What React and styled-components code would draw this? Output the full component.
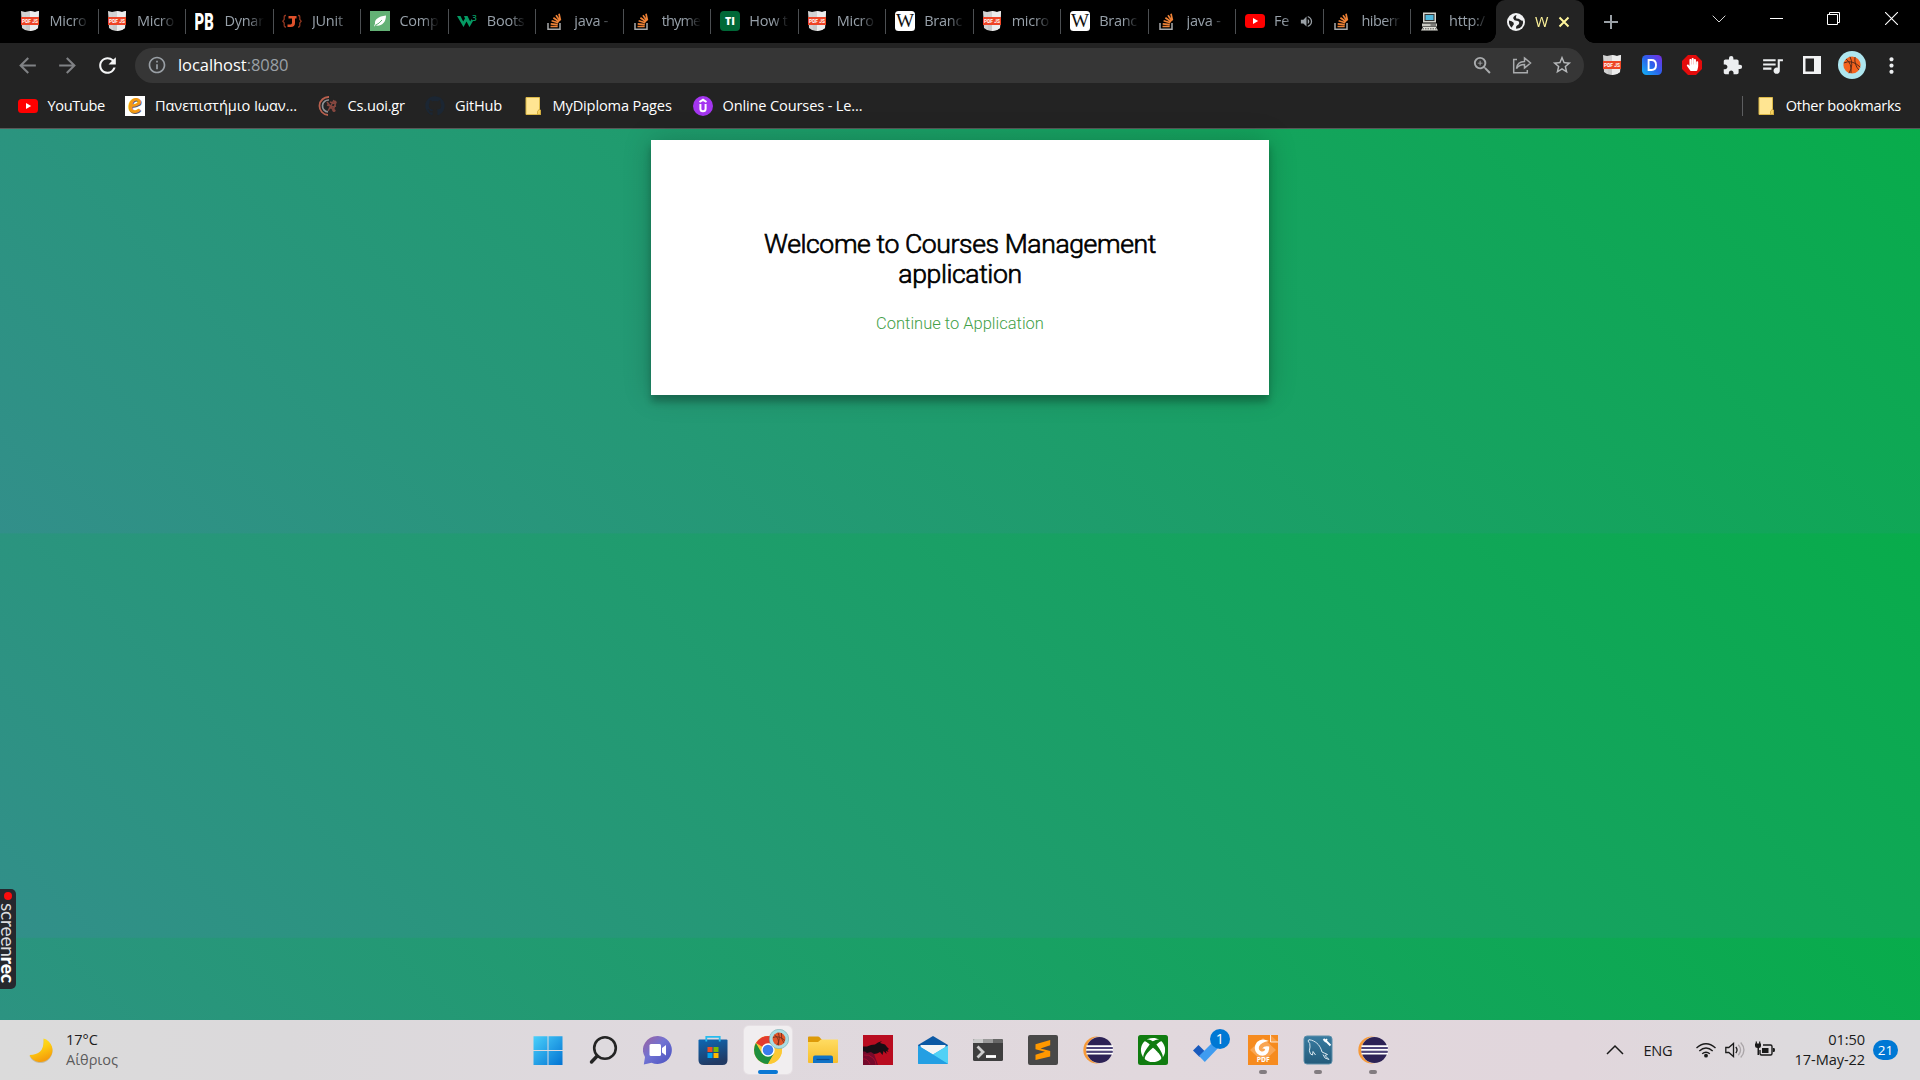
import React from "react";
import styled, { createGlobalStyle, css } from "styled-components";
import {
  MdArrowBack, MdArrowForward, MdRefresh, MdInfoOutline, MdZoomIn, MdStarOutline,
  MdExtension, MdQueueMusic, MdMoreVert, MdVolumeUp,
} from "react-icons/md";
import { FaGithub, FaHandPaper, FaXbox } from "react-icons/fa";

const UI = `"Open Sans", "Noto Sans", sans-serif`;

const GlobalStyle = createGlobalStyle`
  * { box-sizing: border-box; }
  body { margin: 0; overflow: hidden; background: #000; }
  svg { display: block; flex: none; }
`;

const Screen = styled.div`
  width: 1920px;
  height: 1080px;
  display: flex;
  flex-direction: column;
  position: relative;
  overflow: hidden;
  font-family: ${UI};
`;

/* ---------- tab strip ---------- */
const TabStrip = styled.header`
  height: 43px;
  flex: none;
  display: flex;
  background: #000;
  padding-left: 11.5px;
`;
const Tab = styled.div`
  width: 87.47px;
  height: 42px;
  flex: none;
  display: flex;
  align-items: center;
  padding-left: 8.5px;
`;
const TabTitle = styled.span`
  margin-left: 9.5px;
  flex: 1;
  min-width: 0;
  white-space: nowrap;
  font-size: 14.5px;
  letter-spacing: ${(p) => p.$ls ?? -0.25}px;
  line-height: 20px;
  color: ${(p) => (p.$active ? "#fff59b" : "#97a0a9")};
  mask-image: linear-gradient(90deg, #000 calc(100% - ${(p) => (p.$active ? 8 : 16)}px), transparent);
`;
const TabEnd = styled.span`
  width: ${(p) => (p.$hidden ? 10 : 1)}px;
  margin-left: ${(p) => (p.$hidden ? 0 : 9)}px;
  height: 25px;
  background: ${(p) => (p.$hidden ? "transparent" : "#4c4f52")};
`;
const ActiveTab = styled.div`
  width: 88px;
  height: 43px;
  margin-left: -2px;
  flex: none;
  display: flex;
  align-items: center;
  padding: 0 14px 0 11px;
  background: #232323;
  border-radius: 9px 9px 0 0;
  position: relative;
  &::before, &::after {
    content: "";
    position: absolute;
    bottom: 0;
    width: 10px;
    height: 10px;
  }
  &::before { left: -10px; background: radial-gradient(circle at 0 0, transparent 9.5px, #232323 10px); }
  &::after { right: -10px; background: radial-gradient(circle at 100% 0, transparent 9.5px, #232323 10px); }
`;
const NewTab = styled.div`
  width: 54px;
  height: 43px;
  display: flex;
  align-items: center;
  justify-content: center;
`;
const WindowButtons = styled.div`
  display: flex;
  margin-left: auto;
`;
const WindowButton = styled.div`
  width: 57.4px;
  height: 37px;
  display: flex;
  align-items: center;
  justify-content: center;
`;

/* ---------- toolbar ---------- */
const Toolbar = styled.div`
  height: 43px;
  flex: none;
  display: flex;
  align-items: center;
  padding: 1px 8px 0 7.5px;
  background: #232323;
`;
const ToolButton = styled.div`
  width: 40px;
  height: 40px;
  display: flex;
  align-items: center;
  justify-content: center;
  color: ${(p) => p.$color || "#eceef0"};
`;
const Omnibox = styled.div`
  width: 1450px;
  height: 35px;
  margin: 0 7.7px 0 7.5px;
  border-radius: 18px;
  background: #363636;
  display: flex;
  align-items: center;
  padding: 0 2px 0 12.5px;
  color: #9aa0a6;
`;
const Address = styled.span`
  margin-left: 10.5px;
  font-size: 16.5px;
  line-height: 24px;
  letter-spacing: -0.05px;
  color: #fff;
  em { font-style: normal; color: #9aa0a6; }
`;
const OmniActions = styled.div`
  margin-left: auto;
  display: flex;
`;

/* ---------- bookmarks ---------- */
const Bookmarks = styled.nav`
  height: 43px;
  flex: none;
  display: flex;
  align-items: center;
  padding: 0 19px 3px 18px;
  background: #232323;
  border-bottom: 1px solid #585858;
`;
const Bookmark = styled.div`
  width: ${(p) => (p.$w ? `${p.$w}px` : "auto")};
  display: flex;
  align-items: center;
  color: #fff;
  white-space: nowrap;
  font-size: 14.6px;
  line-height: 20px;
  letter-spacing: ${(p) => p.$ls || 0}px;
  span { margin: 0 0 1px ${(p) => p.$gap || 10}px; }
`;
const BarDivider = styled.i`
  width: 1px;
  height: 20px;
  margin: 0 14px 0 auto;
  background: #5d5e60;
`;

/* ---------- web page ---------- */
const Page = styled.main`
  flex: 1;
  background: linear-gradient(45deg, #328f8a, #08ac4b) 0 0 / 100% 404.4px repeat-y;
  padding-top: 11px;
`;
const Card = styled.section`
  width: 618px;
  height: 255px;
  margin: 0 auto;
  padding: 89px 62px 0;
  background: #fff;
  box-shadow: 0 0 27px 0 rgba(0, 0, 0, 0.2), 0 7px 7px 0 rgba(0, 0, 0, 0.24);
  text-align: center;
  font-family: Roboto, sans-serif;
`;
const Heading = styled.h1`
  margin: 0 0 25px;
  font-size: 26.6px;
  font-weight: 300;
  line-height: 30px;
  letter-spacing: -0.4px;
  color: #000;
  -webkit-text-stroke: 0.7px #000;
`;
const Continue = styled.a`
  display: block;
  font-size: 16.5px;
  font-weight: 300;
  line-height: 20px;
  color: #43a047;
`;

/* ---------- recorder handle ---------- */
const Recorder = styled.aside`
  position: absolute;
  left: 0;
  top: 889px;
  width: 16px;
  height: 100px;
  border-radius: 0 5px 5px 0;
  background: #26282e;
  display: flex;
  flex-direction: column;
  align-items: center;
  padding-top: 3px;
  &::before {
    content: "";
    width: 8px;
    height: 8px;
    margin-right: 1px;
    flex: none;
    border-radius: 50%;
    background: #fb0d0d;
  }
  span {
    writing-mode: vertical-rl;
    font: 400 19.2px/16px Lato, sans-serif;
    margin-top: 3px;
    letter-spacing: -0.2px;
    color: #dcdcde;
    white-space: nowrap;
  }
  b { font-weight: 900; color: #fff; }
`;

/* ---------- taskbar ---------- */
const Taskbar = styled.footer`
  height: 60px;
  flex: none;
  display: flex;
  align-items: center;
  background: linear-gradient(90deg, #dbdbdb 0%, #dbd9db 15%, #dfd9de 35%, #e1d8dd 60%, #e1d6dc 82%, #dddadd 93%, #dcdadd 100%);
`;
const Weather = styled.div`
  width: 523.8px;
  padding: 0 0 0 28px;
  display: flex;
  align-items: center;
  font-size: 14.5px;
  line-height: 20px;
  color: #1c1c1c;
`;
const WeatherText = styled.div`
  margin-left: 13px;
  div + div { color: #5b5b5b; }
`;
const Apps = styled.div`
  display: flex;
  gap: 7px;
`;
const AppButton = styled.div`
  width: 48px;
  height: 48px;
  display: flex;
  align-items: center;
  justify-content: center;
  border-radius: 5px;
  position: relative;
  ${(p) => p.$active && css`
    background: #f1eef0;
    box-shadow: 0 0 0 1px #e6e0e4;
  `}
  &::after {
    content: "";
    display: ${(p) => (p.$active || p.$running ? "block" : "none")};
    position: absolute;
    bottom: 0;
    left: calc(50% - ${(p) => (p.$active ? 10 : 4)}px);
    width: ${(p) => (p.$active ? 20 : 8)}px;
    height: 4px;
    border-radius: 2px;
    background: ${(p) => (p.$active ? "#0a78d4" : "#827c80")};
  }
`;
const Overlay = styled.div`
  position: absolute;
  top: 3px;
  right: 3px;
`;
const Count = styled.div`
  position: absolute;
  top: 3px;
  right: 2px;
  width: 20px;
  height: 20px;
  border-radius: 50%;
  background: #0078d4;
  color: #fff;
  font-size: 14.5px;
  line-height: 20px;
  text-align: center;
`;
const Tray = styled.div`
  margin-left: auto;
  height: 60px;
  display: flex;
  align-items: center;
  padding-right: 22px;
  color: #1a1a1a;
`;
const Language = styled.span`
  margin: 0 22px 0 19.5px;
  width: 30px;
  font-size: 14.6px;
  letter-spacing: -0.3px;
`;
const TrayIcons = styled.div`
  display: flex;
  gap: 9.5px;
`;
const Clock = styled.div`
  width: 90.5px;
  padding-bottom: 2px;
  text-align: right;
  font-size: 14.6px;
  line-height: 20px;
  white-space: nowrap;
  letter-spacing: -0.1px;
`;
const Notices = styled.div`
  margin-left: 8px;
  width: 25px;
  height: 20px;
  border-radius: 10px;
  background: #0078d4;
  color: #fff;
  text-align: center;
  font-size: 13.5px;
  line-height: 20px;
`;

/* ---------- favicons ---------- */
const PdfJs = () => (
  <svg width="20" height="20" viewBox="0 0 20 20">
    <path d="M1 0l4 1 5-1 5 1 4-1-1 17-3 2-5 1-5-1-3-2z" fill="#d2d2d2" />
    <path d="M10 0l5 1 4-1-1 17-3 2-5 1z" fill="#ececec" />
    <path d="M5 1l1 18 4 1V13H5z" fill="#bdbdbd" opacity=".5" />
    <rect x="1" y="6" width="18" height="8" fill="#ee4426" />
    <text x="10" y="12.300" fontSize="6.200" fontWeight="700" fontFamily="Roboto, sans-serif" textAnchor="middle" textLength="16" lengthAdjust="spacingAndGlyphs" fill="#fff">PDF JS</text>
  </svg>
);
const ProBootstrap = () => (
  <svg width="20" height="20" viewBox="0 0 20 20">
    <g transform="translate(-.5 18.800) scale(.64 1)">
      <text x="0" y="0" fontSize="24" fontWeight="900" fontFamily="Roboto, sans-serif" fill="#fff" textLength="30" lengthAdjust="spacingAndGlyphs">PB</text>
    </g>
  </svg>
);
const JavaBrace = () => (
  <svg width="20" height="20" viewBox="0 0 20 20" fill="#e0512b">
    <path d="M4 4.500H3.300Q2.200 4.500 2.200 6v2.500L.8 10.200l1.400 1.700v2.600q0 1.500 1.100 1.500H4M16 4.500h.7q1.100 0 1.100 1.500v2.500l1.400 1.700-1.400 1.700v2.600q0 1.500-1.100 1.500H16" fill="none" stroke="#8f3620" strokeWidth="1.300" />
    <path d="M6.500 5h8v2.400H13V12q0 4-4.300 4H5.500v-2.500h3q1.500 0 1.500-1.800V7.400H6.500z" />
  </svg>
);
const Leaf = () => (
  <svg width="20" height="20" viewBox="0 0 20 20">
    <rect width="20" height="20" fill="#63b175" />
    <path d="M16 4.500C8 5.500 4.500 8.500 5 12.500L4 15.500l1.800-1C11 15.500 16 12 16 4.500z" fill="#fff" />
    <path d="M5 14.500q4.500-2 7-5.500" stroke="#63b175" fill="none" />
  </svg>
);
const W3 = () => (
  <svg width="20" height="20" viewBox="0 0 20 20">
    <path d="M0 5h3.500l2.700 5.500L8 7.500 7 5h3.500l2.700 5.500L14.500 8l1.500 2-3.500 6-3-5.500-3 5.500z" fill="#059a63" />
    <text x="15" y="9.500" fontSize="8.500" fontWeight="600" fontFamily="Open Sans, sans-serif" fill="#059a63">3</text>
  </svg>
);
const Stack = () => (
  <svg width="20" height="20" viewBox="0 0 20 20" fill="none">
    <path d="M3 12v6.200h12V12" stroke="#a8a9aa" strokeWidth="1.500" />
    <path d="M5.500 15.500h7.200M5.700 12.900l7.100.8M6.600 9.800l6.700 2M8.400 6.800l5.700 4M11 4.300l4 5.600M14 2.700l1.400 6.600" stroke="#ef8236" strokeWidth="1.700" />
  </svg>
);
const Ti = () => (
  <svg width="20" height="20" viewBox="0 0 20 20">
    <rect width="20" height="20" rx="4" fill="#006837" />
    <text x="10" y="14" fontSize="10.500" fontWeight="800" fontFamily="Open Sans, sans-serif" textAnchor="middle" fill="#fff">TI</text>
  </svg>
);
const Wiki = () => (
  <svg width="20" height="20" viewBox="0 0 20 20">
    <rect width="20" height="20" rx="3.500" fill="#fff" />
    <text x="10" y="16" fontSize="18" fontFamily="Liberation Serif, serif" textAnchor="middle" textLength="18" lengthAdjust="spacingAndGlyphs" fill="#111">W</text>
  </svg>
);
const YouTube = () => (
  <svg width="20" height="20" viewBox="0 0 20 20">
    <rect y="3" width="20" height="14" rx="3.500" fill="#f00" />
    <path d="M8 7l5.200 3L8 13z" fill="#fff" />
  </svg>
);
const Computer = () => (
  <svg width="20" height="20" viewBox="0 0 20 20">
    <rect x="3" y="1.500" width="13" height="10" fill="#d4d4cc" />
    <rect x="4.500" y="3" width="10" height="7" fill="#333" />
    <rect x="5.500" y="4" width="8" height="5" fill="#50b8dc" />
    <path d="M2 12.500h15v3H2z" fill="#c9c9c2" />
    <path d="M10.500 13.500h5.500v1h-5.500z" fill="#333" />
    <path d="M3 16h13l2 3.500H1z" fill="#deded6" />
    <path d="M2.500 17.800h14" stroke="#555" strokeDasharray="1.500 1" />
  </svg>
);
const Globe = () => (
  <svg width="18" height="18" viewBox="0 0 18 18">
    <circle cx="9" cy="9" r="9" fill="#f2f3f4" />
    <path d="M9.500 2Q6 3 6.300 5.500 7 8 10 7.800q2.500.2 2.300 2.300Q12 12 10 12.500q-1.500 1-.8 3.300Q13 16 15 13q1.800-3 .8-5.500-1 .5-2.500-.8Q12 5.500 9.300 5.500 8.500 4 9.500 2z" fill="#232323" />
    <path d="M2 7.500q3 .3 4.500 2 1 2-.5 3-1 .8-1 2.300Q1.500 12.500 2 7.500z" fill="#232323" />
  </svg>
);
const Epsilon = () => (
  <svg width="20" height="20" viewBox="0 0 20 20">
    <rect width="20" height="20" fill="#fff" />
    <text x="10.600" y="18" fontSize="28" fontWeight="700" fontStyle="italic" fontFamily="Lato, sans-serif" textAnchor="middle" fill="#5f6064">e</text>
    <text x="9.800" y="17.200" fontSize="28" fontWeight="700" fontStyle="italic" fontFamily="Lato, sans-serif" textAnchor="middle" fill="#f39a12">e</text>
  </svg>
);
const CsUoi = () => (
  <svg width="20" height="20" viewBox="0 0 20 20" fill="none">
    <path d="M11 1A9 9 0 0 0 10 19" stroke="#b9604e" strokeWidth="1.800" />
    <path d="M11 4a6 6 0 0 0-1 12" stroke="#8d9296" strokeWidth="1.700" />
    <path d="M9 6l7 9M16 4l-6 11M12 6l6 2M11 12l7-2M18 6l-3 9M9 9l7 2" stroke="#86473f" strokeWidth="1.500" />
    <circle cx="17" cy="6" r="1.600" fill="#86473f" /><circle cx="16" cy="14.500" r="1.600" fill="#86473f" />
  </svg>
);
const FolderPage = () => (
  <svg width="18" height="20" viewBox="0 0 18 20">
    <path d="M2 1.500h13.500v12l1 1V18.500H2z" fill="#ffe592" stroke="#dcb948" />
    <path d="M13.500 18.500v-3l2-2.500 1 1.500v4z" fill="#f6d15f" stroke="#c9a437" strokeWidth=".8" />
  </svg>
);
const GitHubMark = () => <FaGithub size={20} color="#1b2633" />;
const Udemy = () => (
  <svg width="20" height="20" viewBox="0 0 20 20">
    <circle cx="10" cy="10" r="10" fill="#a435f0" />
    <path d="M6.500 6L10 3.800 13.500 6M7.400 8v4.700q0 2.600 2.600 2.600t2.600-2.600V8" fill="none" stroke="#fff" strokeWidth="2" />
  </svg>
);
const ShareIcon = () => (
  <svg width="20" height="20" viewBox="0 0 20 20" fill="none" stroke="currentColor" strokeWidth="1.500">
    <path d="M5 4.500H1.700v13.300h13.600V15" />
    <path d="M4.500 13.500C5 9 8 6.500 12.500 6.500V3L18.500 8l-6 5V9.600C9 9.600 6.500 10.500 4.500 13.500z" />
  </svg>
);
const DExt = () => (
  <svg width="20" height="20" viewBox="0 0 20 20">
    <defs><linearGradient id="dx" x1="0" y1="1" x2="1" y2="0"><stop stopColor="#10b5f5" /><stop offset=".5" stopColor="#2c62ec" /><stop offset="1" stopColor="#7a2be2" /></linearGradient></defs>
    <rect width="20" height="20" rx="4.500" fill="url(#dx)" />
    <path d="M6.600 5H9.500q4.500 0 4.500 4.900T9.500 15H6.600z" fill="none" stroke="#fff" strokeWidth="1.900" />
  </svg>
);
const HandStop = () => (
  <svg width="20" height="20" viewBox="0 0 20 20">
    <path d="M6 0h8l6 6v8l-6 6H6l-6-6V6z" fill="#e40b0b" />
    <FaHandPaper x="4" y="3" size="13" color="#fff" />
  </svg>
);
const SidePanel = () => (
  <svg width="18" height="18" viewBox="0 0 18 18">
    <path d="M0 0h18v18H0zM2.500 2.500v13h8.500v-13z" fill="#f1f2f3" fillRule="evenodd" />
  </svg>
);
const Basketball = ({ size = 28 }) => (
  <svg width={size} height={size} viewBox="0 0 28 28">
    <circle cx="14" cy="14" r="14" fill="#aee6ef" />
    <circle cx="14" cy="14" r="8.600" fill="#f4631e" />
    <g fill="none" stroke="#5b2a16" strokeWidth="1">
      <path d="M5.800 12q8-4 16.400 4M12 5.700q4 8-1 16.500M8 8q6 4 5 14M17 6q-1 8 4 13" />
    </g>
  </svg>
);
const BallBadge = () => (
  <svg width="20" height="20" viewBox="0 0 20 20">
    <circle cx="10" cy="10" r="9.700" fill="#a9dde3" stroke="#74a9ae" strokeWidth=".6" />
    <circle cx="10" cy="10" r="6.400" fill="#e4572a" />
    <path d="M4 8.500q6-2.500 12 3M9 3.700q3 6-1 12.500M5.500 6q5 3 4 10.300M12.500 4q-1 6 2.500 10" fill="none" stroke="#6a2c1c" strokeWidth=".8" />
  </svg>
);

/* ---------- taskbar icons ---------- */
const Moon = () => (
  <svg width="25" height="26" viewBox="0 0 25 26">
    <defs><linearGradient id="mn" x1="0" y1="0" x2=".4" y2="1"><stop stopColor="#ffe52c" /><stop offset=".5" stopColor="#fecf10" /><stop offset="1" stopColor="#f59e0b" /></linearGradient></defs>
    <path d="M15.500 1.500A12 12 0 1 1 1.500 18Q17 18 15.500 1.500z" transform="translate(0 1)" fill="#c1bba5" />
    <path d="M15.500 1.500A12 12 0 1 1 1.500 18Q17 18 15.500 1.500z" fill="url(#mn)" />
  </svg>
);
const WinLogo = () => (
  <svg width="30" height="30" viewBox="0 0 30 30">
    <defs><linearGradient id="wn" gradientUnits="userSpaceOnUse" x1="0" y1="0" x2="30" y2="30"><stop stopColor="#4cd3fc" /><stop offset="1" stopColor="#0272d2" /></linearGradient></defs>
    <path d="M.5 1.200h14v13.800H.5zM15.500 1.200h14v13.800h-14zM.5 16h14v14H.5zM15.500 16h14v14h-14z" fill="url(#wn)" />
  </svg>
);
const Search = () => (
  <svg width="30" height="30" viewBox="0 0 30 30" fill="none" stroke="#242424">
    <circle cx="17" cy="13" r="10.800" strokeWidth="2.600" fill="#dedade" />
    <path d="M9.200 21L3.500 27" strokeWidth="3.400" strokeLinecap="round" />
  </svg>
);
const Chat = () => (
  <svg width="30" height="30" viewBox="0 0 30 30">
    <defs><linearGradient id="ct" x1="0" y1="0" x2="1" y2="1"><stop stopColor="#a0619d" /><stop offset=".45" stopColor="#7173d3" /><stop offset="1" stopColor="#4950bf" /></linearGradient></defs>
    <path d="M15 1a14.500 14 0 1 1-6.500 26.800L.8 29.500 2 22A14.500 14 0 0 1 15 1z" fill="url(#ct)" />
    <rect x="6.500" y="9" width="11.500" height="12" rx="1.500" fill="#fff" />
    <path d="M19 13l4-3v10.500l-4-3z" fill="#fff" />
  </svg>
);
const Store = () => (
  <svg width="30" height="30" viewBox="0 0 30 30">
    <defs><linearGradient id="st" x1="0" y1="0" x2=".3" y2="1"><stop stopColor="#0e68b4" /><stop offset="1" stopColor="#213a64" /></linearGradient></defs>
    <path d="M.5 5.500q0-1 1-1h27q1 0 1 1V25q0 5-5 5h-19q-5 0-5-5z" fill="url(#st)" />
    <path d="M8.300 6.500V1.800h13.400v4.700" fill="none" stroke="#27bbee" strokeWidth="1.800" />
    <path d="M9.500 12h5v5h-5z" fill="#f25022" /><path d="M15.500 12h5v5h-5z" fill="#7fba00" />
    <path d="M9.500 18h5v5h-5z" fill="#00a4ef" /><path d="M15.500 18h5v5h-5z" fill="#ffb900" />
  </svg>
);
const Chrome = () => (
  <svg width="28" height="28" viewBox="0 0 28 28">
    <circle cx="14" cy="14" r="14" fill="#fcc934" />
    <path d="M14 14L1.900 7A14 14 0 0 1 26.100 7z" fill="#e33b2e" />
    <path d="M1.900 7a14 14 0 0 0 12.100 21l6-10.500L14 14 8 17.500z" fill="#1e8e3e" />
    <path d="M14 7.500h12.300A14 14 0 0 1 14 28l6-10.500z" fill="#fcc934" />
    <circle cx="14" cy="14" r="6.700" fill="#fff" /><circle cx="14" cy="14" r="5.300" fill="#3b7ded" />
  </svg>
);
const Explorer = () => (
  <svg width="30" height="28" viewBox="0 0 30 28">
    <defs><linearGradient id="fo" x1="0" y1="0" x2="0" y2="1"><stop stopColor="#ffdc62" /><stop offset="1" stopColor="#f7bd2b" /></linearGradient></defs>
    <path d="M0 1.500Q0 .5 1 .5h9q1 0 1.600.7L14 4v6H0z" fill="#dd9a09" />
    <path d="M0 6h10l3-2.500h17V26q0 1-1 1H1q-1 0-1-1z" fill="url(#fo)" />
    <path d="M5 27v-5.500Q5 19.500 7 19.500h16q2 0 2 2V27z" fill="#1173c6" />
    <path d="M8.500 23.500h13" stroke="#0b4a8d" strokeWidth="1.200" />
  </svg>
);
const Dragon = () => (
  <svg width="30" height="30" viewBox="0 0 30 30">
    <rect width="30" height="30" fill="#b90c20" />
    <path d="M0 14q7 0 11 5l4 11H0z" fill="#750a2c" />
    <path d="M0 11.500h4l4-1.500 4-.5 3-2 4-1.500-2 2 5 1.500 2 2.500 2 2-1.500 1 1 2-2.500-1 .5 3-3-3-1 4-2.500-3-3 1.500-3 .5-3-2-4 1-2-1.500H0z" fill="#180e14" />
    <path d="M1 20q5-1 9 3 3 3 3 7M0 24q4-1 7 5" fill="none" stroke="#a50f31" />
  </svg>
);
const Mail = () => (
  <svg width="30" height="28" viewBox="0 0 30 28">
    <path d="M0 9L15 0l15 9v3H0z" fill="#0c59a4" />
    <path d="M2.500 9h25v10h-25z" fill="#f5f5f5" />
    <path d="M0 9.500L15 18.500 30 9.500V27q0 1-1 1H1q-1 0-1-1z" fill="#2bacea" />
    <path d="M30 9.500V28L15 18.500z" fill="#50d1f6" />
    <path d="M0 9.500L30 28H1q-1 0-1-1z" fill="#249fe3" />
  </svg>
);
const Terminal = () => (
  <svg width="30" height="24" viewBox="0 0 30 24">
    <rect y="1" width="30" height="22" rx="1.500" fill="#3e3e3e" />
    <path d="M0 5V2.500Q0 1 1.500 1H10v4z" fill="#c9c9c9" /><path d="M10 1h10v4H10z" fill="#999" /><path d="M20 1h8.500q1.500 0 1.500 1.500V5H20z" fill="#666" />
    <path d="M4.500 8.500L10 14l-5.500 5.500" stroke="#ccc" strokeWidth="2.800" fill="none" />
    <path d="M13 18.500h10" stroke="#fff" strokeWidth="2.800" />
  </svg>
);
const Sublime = () => (
  <svg width="30" height="30" viewBox="0 0 30 30">
    <rect width="30" height="30" rx="2" fill="#484848" />
    <path d="M22.200 5v5.200L12.500 13.500l9.700 2.600v5.300L7.500 25v-5.200L17 16.800l-9.500-2.600V9.200z" fill="#ff9800" />
  </svg>
);
const Eclipse = () => (
  <svg width="30" height="28" viewBox="0 0 30 28">
    <circle cx="13.800" cy="14" r="13.500" fill="#f79a38" />
    <circle cx="17" cy="14" r="13.600" fill="#e2d8dd" />
    <circle cx="16.500" cy="14" r="13" fill="#2c2255" />
    <path d="M3.500 10.200h26.500M3.200 13.900h27M3.500 17.600h26.500" stroke="#fff" strokeWidth="1.700" />
    <path d="M3.500 12h26.500M3.500 15.800h26.500" stroke="#5a5286" strokeWidth="1.300" />
  </svg>
);
const Xbox = () => (
  <svg width="30" height="30" viewBox="0 0 30 30">
    <rect width="30" height="30" rx="2.500" fill="#107c10" />
    <FaXbox x="2.500" y="2.500" size="25" color="#fff" />
  </svg>
);
const Todo = () => (
  <svg width="30" height="30" viewBox="0 0 30 30">
    <path d="M0 15.500L5.500 10l6.500 6.500L6.500 22z" fill="#185abd" />
    <path d="M6 21L21.500 5.500 27 11 11.800 27z" fill="#3f9cf0" />
  </svg>
);
const Foxit = () => (
  <svg width="30" height="30" viewBox="0 0 30 30">
    <rect width="30" height="30" fill="#f68b1f" />
    <path d="M2 15L15 3l13 12-13 12z" fill="#f9a654" />
    <path d="M22.500 0v7H30" fill="#f8a047" stroke="#fff" strokeWidth=".8" />
    <path d="M21 6Q13.500 2.500 9 7q-4.500 6 0 11.500 4 3.500 8.500 1.500 4-2.500 3.700-8.500-5-1-7 2 2.300-.5 3 1-.8 2.500-3.700 2-3.500-1-2.500-5Q13 7 21 6z" fill="#fff" />
    <text x="15.200" y="27.300" fontSize="6.500" fontWeight="700" fontFamily="Open Sans, sans-serif" textAnchor="middle" fill="#fff" textLength="13" lengthAdjust="spacingAndGlyphs">PDF</text>
  </svg>
);
const MySql = () => (
  <svg width="30" height="30" viewBox="0 0 30 30">
    <defs><linearGradient id="my" x1="0" y1="0" x2="0" y2="1"><stop stopColor="#397ca1" /><stop offset="1" stopColor="#245b7b" /></linearGradient></defs>
    <rect x="1" y="1" width="28" height="28" rx="3" fill="url(#my)" stroke="#5c8ea9" />
    <path d="M5 6Q5 3.800 8.500 5.200C14 7 17.500 11 19 17l5.500 2.500-2.500 1 4 4M5 6q2.500 2 2 6-1.500 4 .5 7l2 1 .5-3.500 2.500 3.500M20 19.500l2 3.500 4 1.500" fill="none" stroke="#d8e7ef" strokeWidth="1" />
    <path d="M20.500 4l1.800 2 1.700-1.800M22.500 5.500l5 5" stroke="#fff" strokeWidth="1.900" fill="none" />
  </svg>
);

/* ---------- tray icons ---------- */
const Chevron = () => (
  <svg width="18" height="12" viewBox="0 0 18 12" fill="none" stroke="#1a1a1a" strokeWidth="1.500"><path d="M1 10l8-8 8 8" /></svg>
);
const Wifi = () => (
  <svg width="20" height="20" viewBox="0 0 20 20" fill="none" stroke="#1a1a1a" strokeWidth="1.400">
    <path d="M.5 8q9.500-8.500 19 0M3.300 11q6.700-6 13.400 0M6.200 13.800q3.800-3.300 7.600 0" />
    <circle cx="10" cy="15.700" r="1.900" fill="#1a1a1a" stroke="none" />
  </svg>
);
const Volume = () => (
  <svg width="20" height="20" viewBox="0 0 20 20" fill="none" stroke="#1a1a1a" strokeWidth="1.300">
    <path d="M.8 7.500h3L8.500 3.500v13L3.800 12.500h-3z" /><path d="M10.800 7q2.500 3 0 6" />
    <path d="M13.300 4.800q4.500 5.200 0 10.400M15.700 2.500q6.500 7.500 0 15" stroke="#aaa5a8" />
  </svg>
);
const Battery = () => (
  <svg width="20" height="20" viewBox="0 0 20 20">
    <path d="M8 5h7.500Q17 5 17 6.500v7q0 1.500-1.500 1.500h-9Q5 15 5 13.500V10" fill="none" stroke="#1a1a1a" strokeWidth="1.400" />
    <path d="M7 8h6.500v5H7zM17.800 8h1.200q1 0 1 2t-1 2h-1.200z" fill="#1a1a1a" />
    <path d="M1.300 1.500v3M4.700 1.500v3" stroke="#1a1a1a" strokeWidth="1.200" />
    <path d="M0 3.500h6V6q0 2-2 2v7H2.500V8Q0 8 0 6z" fill="#1a1a1a" />
  </svg>
);

const TABS = [
  [PdfJs, "Micro"], [PdfJs, "Micro"], [ProBootstrap, "Dynar"], [JavaBrace, "JUnit"],
  [Leaf, "Comp"], [W3, "Boots"], [Stack, "java -"], [Stack, "thyme", false, -0.9], [Ti, "How t"],
  [PdfJs, "Micro"], [Wiki, "Branc"], [PdfJs, "micro"], [Wiki, "Branc"], [Stack, "java -"],
  [YouTube, "Fe", true], [Stack, "hiberr", false, -0.6], [Computer, "http:/"],
];

const BOOKMARKS = [
  [YouTube, "YouTube", 107, 9.5, -0.4],
  [Epsilon, "Πανεπιστήμιο Ιωαν...", 193, 10, -0.1],
  [CsUoi, "Cs.uoi.gr", 107, 9.5, -0.2],
  [GitHubMark, "GitHub", 99, 10, -0.2],
  [FolderPage, "MyDiploma Pages", 169, 10.5, -0.15],
  [Udemy, "Online Courses - Le...", 0, 9.5, -0.15],
];

const APPS = [
  { icon: WinLogo }, { icon: Search }, { icon: Chat }, { icon: Store },
  { icon: Chrome, active: true }, { icon: Explorer }, { icon: Dragon }, { icon: Mail },
  { icon: Terminal }, { icon: Sublime }, { icon: Eclipse }, { icon: Xbox },
  { icon: Todo, count: 1 }, { icon: Foxit, running: true }, { icon: MySql, running: true },
  { icon: Eclipse, running: true },
];

export default function App() {
  return (
    <>
      <GlobalStyle />
      <Screen>
        <TabStrip>
          {TABS.map(([Icon, title, sound, ls], i) => (
            <Tab key={i}>
              <Icon />
              <TabTitle $ls={ls}>{title}</TabTitle>
              {sound && <MdVolumeUp size={15} color="#9aa0a6" />}
              <TabEnd $hidden={i === TABS.length - 1} />
            </Tab>
          ))}
          <ActiveTab>
            <Globe />
            <TabTitle $active>W</TabTitle>
            <svg width="12" height="12" viewBox="0 0 12 12">
              <path d="M1.500 1.500l9 9M10.500 1.500l-9 9" stroke="#fff59b" strokeWidth="2" />
            </svg>
          </ActiveTab>
          <NewTab>
            <svg width="16" height="16" viewBox="0 0 16 16"><path d="M8 1v14M1 8h14" stroke="#9aa0a6" strokeWidth="2" /></svg>
          </NewTab>
          <WindowButtons>
            <WindowButton><svg width="14" height="8" viewBox="0 0 14 8"><path d="M.7.700L7 7 13.300.700" fill="none" stroke="#d5d5d5" /></svg></WindowButton>
            <WindowButton><svg width="13" height="1"><path d="M0 .5h13" stroke="#fff" /></svg></WindowButton>
            <WindowButton><svg width="13" height="13" viewBox="0 0 13 13" fill="none" stroke="#fff"><path d="M.5 2.500h10v10H.5zM2.500 2.500v-2h10v10h-2" /></svg></WindowButton>
            <WindowButton><svg width="13" height="13" viewBox="0 0 13 13"><path d="M0 0l13 13M13 0L0 13" stroke="#fff" strokeWidth="1.100" /></svg></WindowButton>
          </WindowButtons>
        </TabStrip>

        <Toolbar>
          <ToolButton $color="#808285"><MdArrowBack size={25} /></ToolButton>
          <ToolButton $color="#808285"><MdArrowForward size={25} /></ToolButton>
          <ToolButton $color="#f4f5f6"><MdRefresh size={25} /></ToolButton>
          <Omnibox>
            <MdInfoOutline size={20} />
            <Address>localhost<em>:8080</em></Address>
            <OmniActions>
              <ToolButton $color="#a9abad"><MdZoomIn size={23} /></ToolButton>
              <ToolButton $color="#a9abad"><ShareIcon /></ToolButton>
              <ToolButton $color="#b6b8ba"><MdStarOutline size={22} /></ToolButton>
            </OmniActions>
          </Omnibox>
          <ToolButton><PdfJs /></ToolButton>
          <ToolButton><DExt /></ToolButton>
          <ToolButton><HandStop /></ToolButton>
          <ToolButton><MdExtension size={21} /></ToolButton>
          <ToolButton><MdQueueMusic size={25} /></ToolButton>
          <ToolButton><SidePanel /></ToolButton>
          <ToolButton><Basketball /></ToolButton>
          <ToolButton><MdMoreVert size={25} /></ToolButton>
        </Toolbar>

        <Bookmarks>
          {BOOKMARKS.map(([Icon, label, w, gap, ls]) => (
            <Bookmark key={label} $w={w} $gap={gap} $ls={ls}><Icon /><span>{label}</span></Bookmark>
          ))}
          <BarDivider />
          <Bookmark $gap={10.5} $ls={-0.3}><FolderPage /><span>Other bookmarks</span></Bookmark>
        </Bookmarks>

        <Page>
          <Card>
            <Heading>Welcome to Courses Management application</Heading>
            <Continue>Continue to Application</Continue>
          </Card>
        </Page>

        <Recorder><span>screen<b>rec</b></span></Recorder>

        <Taskbar>
          <Weather>
            <Moon />
            <WeatherText><div>17°C</div><div>Αίθριος</div></WeatherText>
          </Weather>
          <Apps>
            {APPS.map(({ icon: Icon, active, running, count }, i) => (
              <AppButton key={i} $active={active} $running={running}>
                <Icon />
                {active && <Overlay><BallBadge /></Overlay>}
                {count && <Count>{count}</Count>}
              </AppButton>
            ))}
          </Apps>
          <Tray>
            <Chevron />
            <Language>ENG</Language>
            <TrayIcons><Wifi /><Volume /><Battery /></TrayIcons>
            <Clock><div>01:50</div><div>17-May-22</div></Clock>
            <Notices>21</Notices>
          </Tray>
        </Taskbar>
      </Screen>
    </>
  );
}
